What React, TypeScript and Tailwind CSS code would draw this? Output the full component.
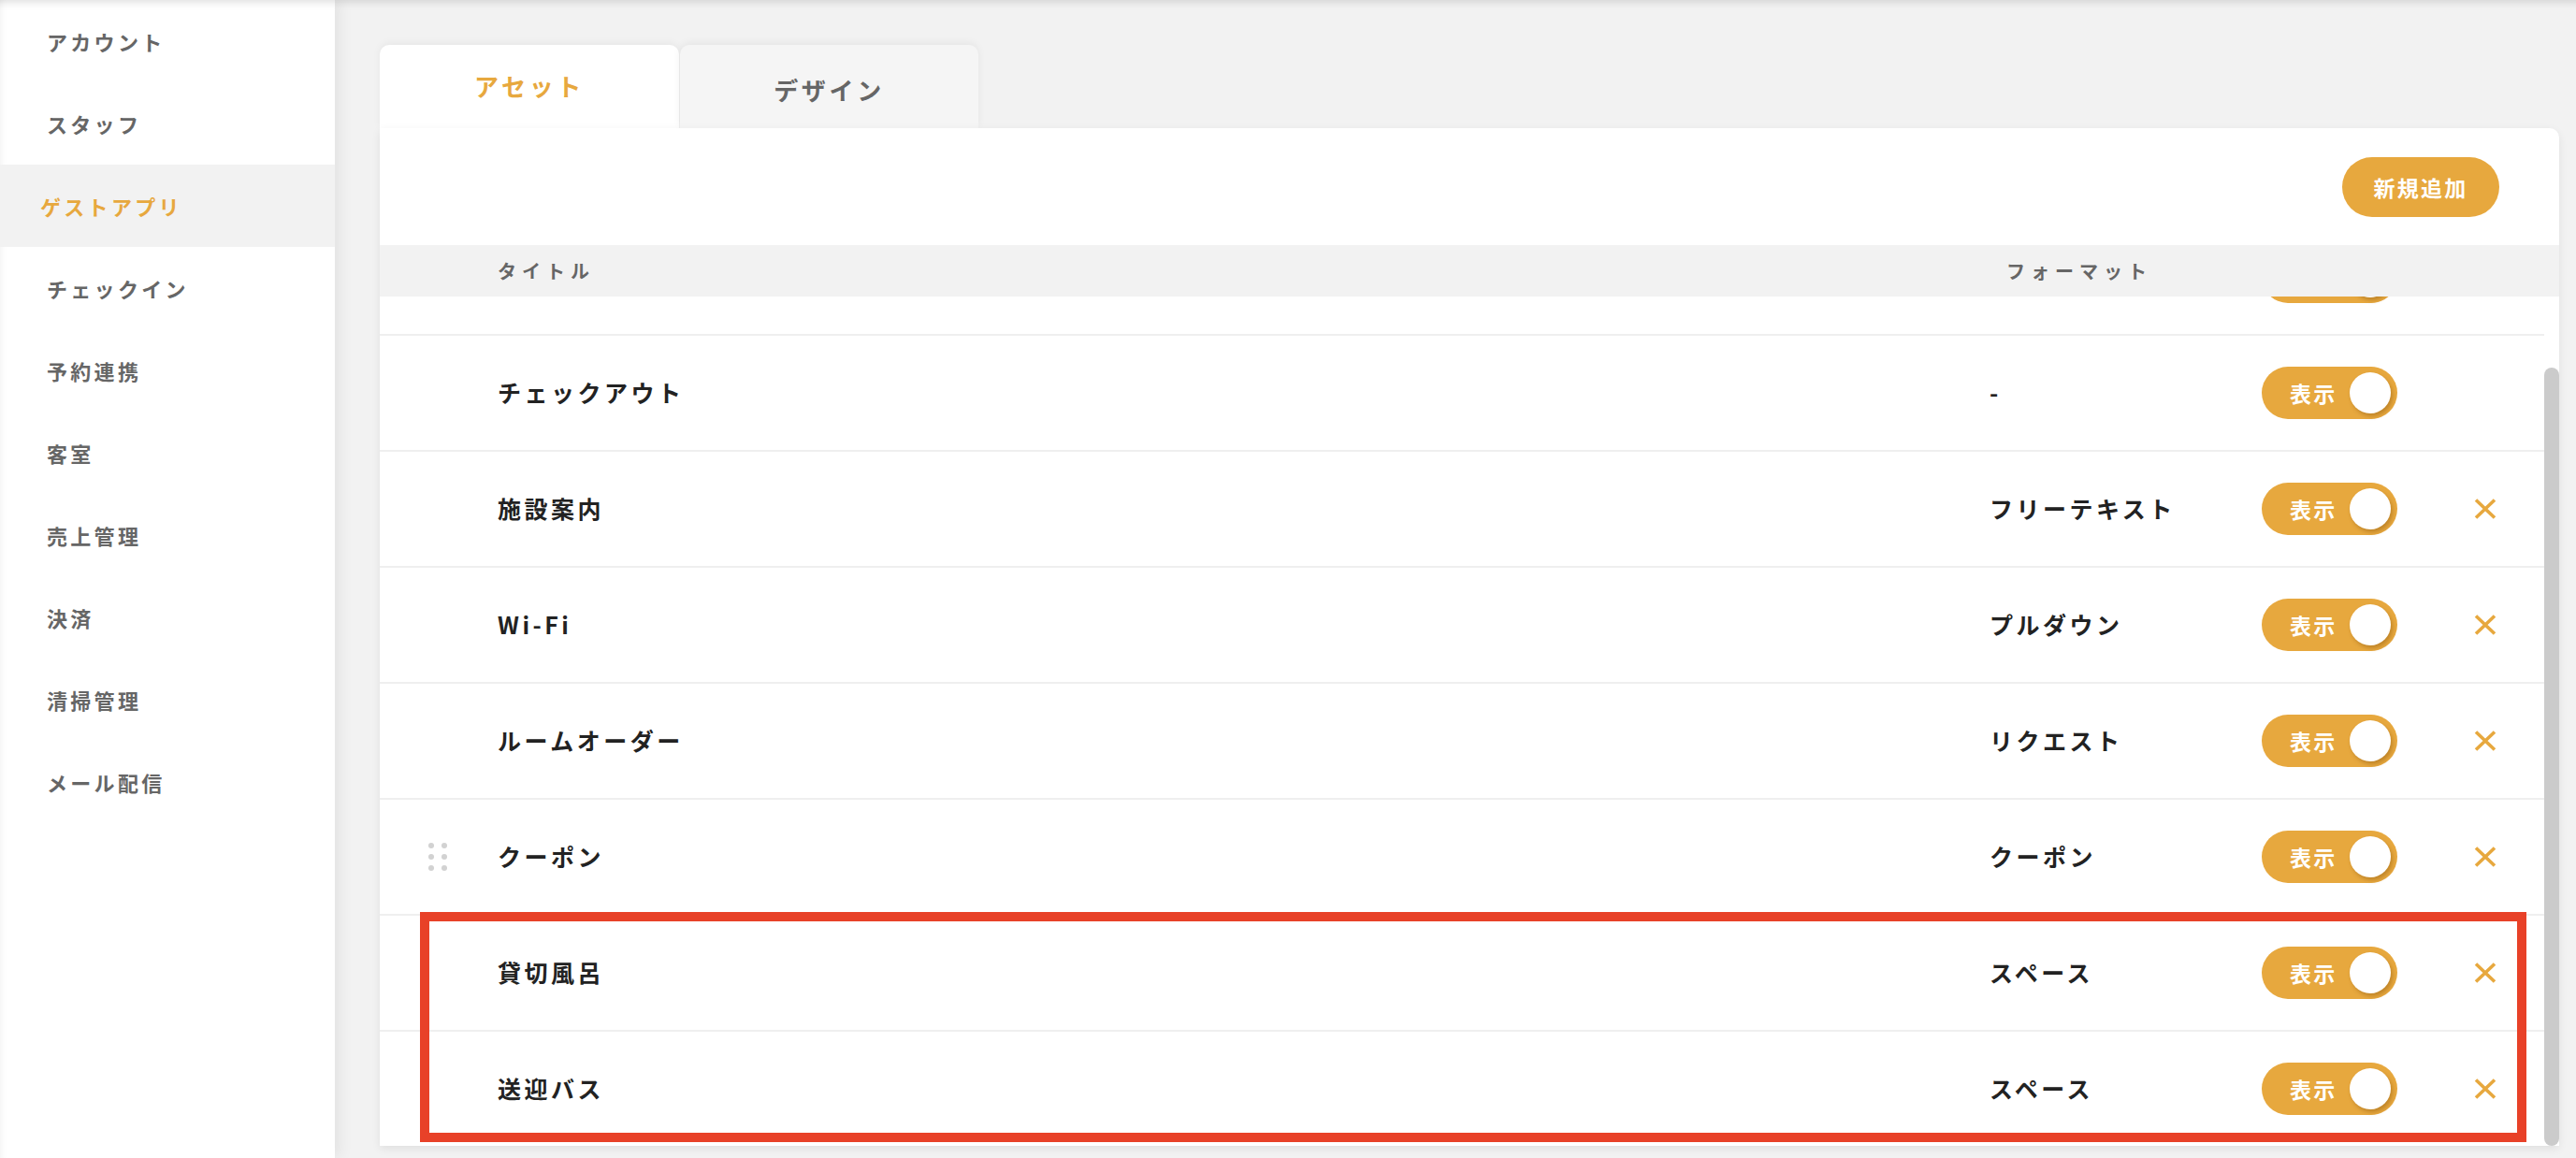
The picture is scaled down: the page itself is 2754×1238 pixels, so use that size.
import React from 'react';

const NAV_ITEMS = ['アカウント', 'スタッフ', 'ゲストアプリ', 'チェックイン', '予約連携', '客室', '売上管理', '決済', '清掃管理', 'メール配信'];

type Asset = { title: string; format: string; removable: boolean; handle?: boolean; label?: boolean };

// first row is scrolled up under the header, only the bottom of its toggle shows
const ASSETS: Asset[] = [
  { title: '', format: '', removable: false, label: false },
  { title: 'チェックアウト', format: '-', removable: false },
  { title: '施設案内', format: 'フリーテキスト', removable: true },
  { title: 'Wi-Fi', format: 'プルダウン', removable: true },
  { title: 'ルームオーダー', format: 'リクエスト', removable: true },
  { title: 'クーポン', format: 'クーポン', removable: true, handle: true },
  { title: '貸切風呂', format: 'スペース', removable: true },
  { title: '送迎バス', format: 'スペース', removable: true },
];

function Sidebar() {
  return (
    <aside className="relative z-10 h-full w-[358px] shrink-0 bg-white shadow-[inset_0_12px_10px_-10px_rgba(0,0,0,0.14),inset_8px_0_8px_-8px_rgba(0,0,0,0.07),6px_0_14px_rgba(0,0,0,0.06)]">
      {NAV_ITEMS.map((label) => {
        const active = label === 'ゲストアプリ';
        return (
          <div
            key={label}
            className={
              active
                ? 'flex h-[88px] items-center bg-[#f2f2f2] pl-[43px] text-[22px] font-bold tracking-[0.15em] text-[#e7a83e]'
                : 'flex h-[88px] items-center pl-[50px] text-[22px] font-bold tracking-[0.15em] text-[#666666]'
            }
          >
            {label}
          </div>
        );
      })}
    </aside>
  );
}

function DragHandle() {
  return (
    <div className="grid grid-cols-2 gap-x-[8px] gap-y-[6px]">
      {[0, 1, 2, 3, 4, 5].map((i) => (
        <span key={i} className="h-[6px] w-[6px] rounded-full bg-[#d2d2d2]" />
      ))}
    </div>
  );
}

function ShowToggle({ label = true }: { label?: boolean }) {
  return (
    <div className="flex h-[56px] w-[145px] items-center rounded-full bg-[#e7a83e] pl-[30px] pr-[7px]">
      {label && <span className="text-[23px] font-bold leading-none tracking-[0.1em] text-white">表示</span>}
      <span className="ml-auto h-[44px] w-[44px] rounded-full bg-white shadow-[2px_3px_4px_rgba(120,70,0,0.35)]" />
    </div>
  );
}

function RemoveIcon() {
  return (
    <svg width="24" height="22" viewBox="0 0 24 22" fill="none">
      <path d="M2 1.5L22 20.5M22 1.5L2 20.5" stroke="#e7a83e" strokeWidth="3.6" />
    </svg>
  );
}

function AssetRow({ asset }: { asset: Asset }) {
  return (
    <div className="flex h-[124px] shrink-0 items-center border-b-2 border-[#efefef]">
      <div className="flex w-[126px] shrink-0 items-center pl-[52px]">{asset.handle && <DragHandle />}</div>
      <div className="w-[1595px] shrink-0 text-[25px] font-bold tracking-[0.14em] text-[#222222]">{asset.title}</div>
      <div className="w-[291px] shrink-0 text-[25px] font-bold tracking-[0.14em] text-[#222222]">{asset.format}</div>
      <ShowToggle label={asset.label !== false} />
      <div className="ml-[82px] flex w-[24px] items-center">{asset.removable && <RemoveIcon />}</div>
    </div>
  );
}

export default function App() {
  return (
    <div
      className="relative flex h-[1238px] w-[2754px] overflow-hidden bg-[#f2f2f2]"
      style={{ fontFamily: '"Noto Sans CJK JP", "Noto Sans", sans-serif' }}
    >
      <Sidebar />

      <main className="flex h-full flex-1 flex-col bg-[#f2f2f2] pb-[13px] pl-[48px] pr-[18px] pt-[48px] shadow-[inset_0_12px_10px_-10px_rgba(0,0,0,0.14)]">
        <div className="flex h-[89px] shrink-0 gap-[1px]">
          <div className="flex w-[320px] items-center justify-center rounded-t-[10px] bg-white pb-[2px] text-[26px] font-bold tracking-[0.14em] text-[#e7a83e] shadow-[0_-2px_8px_rgba(0,0,0,0.05)]">
            アセット
          </div>
          <div className="flex w-[319px] items-center justify-center rounded-t-[10px] bg-[#f5f5f5] pt-[6px] text-[26px] font-bold tracking-[0.14em] text-[#666666] shadow-[0_-2px_8px_rgba(0,0,0,0.06)]">
            デザイン
          </div>
        </div>

        <section className="relative flex min-h-0 flex-1 flex-col overflow-hidden rounded-tr-[10px] bg-white shadow-[0_3px_10px_rgba(0,0,0,0.08)]">
          <div className="flex h-[125px] shrink-0 items-start justify-end pr-[64px] pt-[31px]">
            <button className="flex h-[64px] w-[168px] items-center justify-center rounded-full bg-[#e7a83e] text-[23px] font-bold tracking-[0.1em] text-white">
              新規追加
            </button>
          </div>

          <div className="flex h-[55px] shrink-0 items-center bg-[#f2f2f2] text-[20px] font-bold tracking-[0.3em] text-[#666666]">
            <div className="w-[126px] shrink-0" />
            <div className="w-[1613px] shrink-0">タイトル</div>
            <div>フォーマット</div>
          </div>

          <div className="flex min-h-0 flex-1">
            <div className="min-w-0 flex-1 overflow-hidden">
              <div className="-mt-[82px] flex flex-col">
                {ASSETS.map((asset, i) => (
                  <AssetRow key={i} asset={asset} />
                ))}
              </div>
            </div>
            <div className="flex w-[16px] shrink-0 flex-col pt-[76px]">
              <div className="flex-1 rounded-full bg-[#cbcbcb]" />
            </div>
          </div>
        </section>
      </main>

      <div className="pointer-events-none absolute left-[449px] top-[975px] h-[246px] w-[2252px] border-[10px] border-[#e84128]" />
    </div>
  );
}
